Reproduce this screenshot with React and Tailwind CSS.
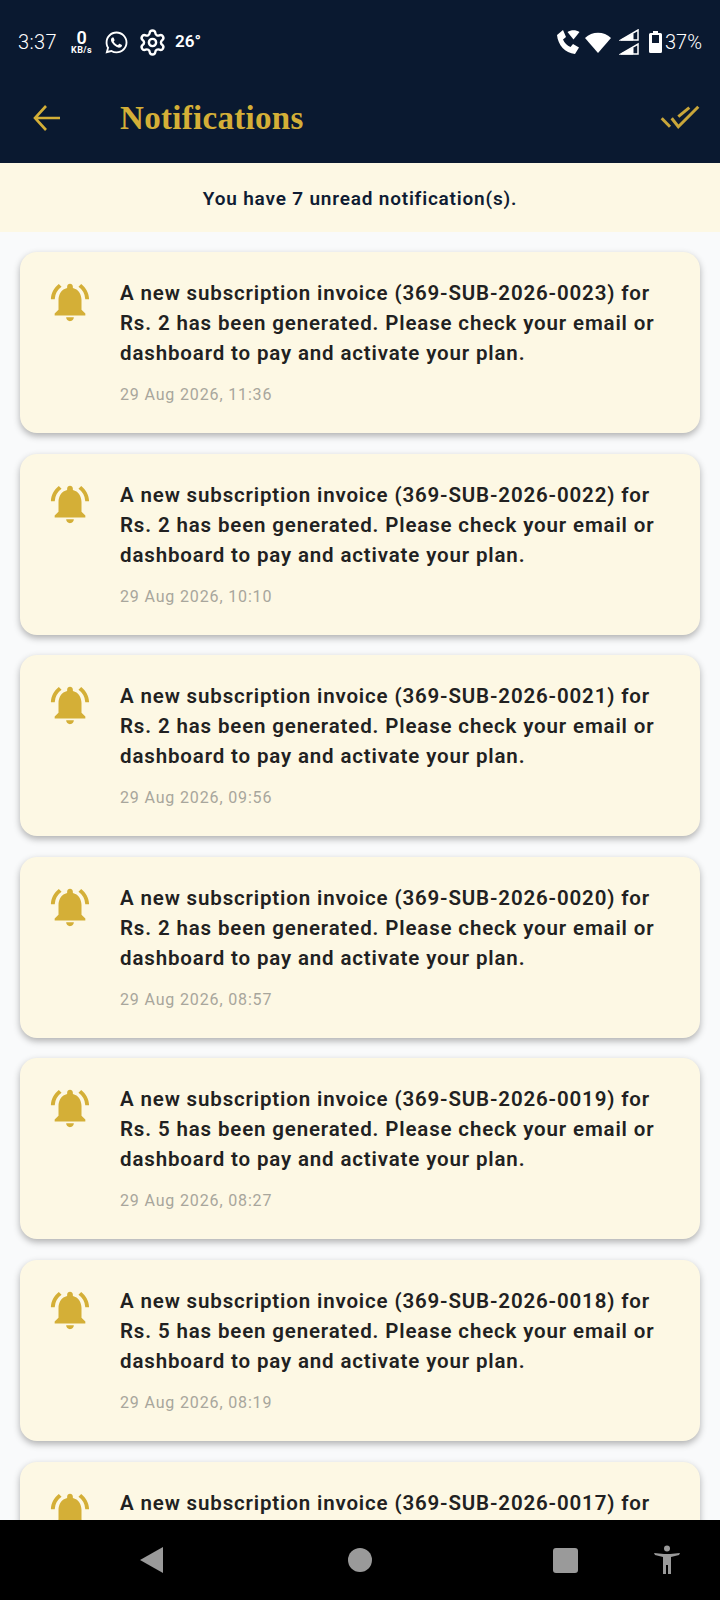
import React from 'react'
import { FaWhatsapp } from 'react-icons/fa'
import { MdNotificationsActive } from 'react-icons/md'
import { Settings } from 'lucide-react'

const NOTIFICATIONS = [
  { invoice: '369-SUB-2026-0023', amount: 2, date: '29 Aug 2026, 11:36' },
  { invoice: '369-SUB-2026-0022', amount: 2, date: '29 Aug 2026, 10:10' },
  { invoice: '369-SUB-2026-0021', amount: 2, date: '29 Aug 2026, 09:56' },
  { invoice: '369-SUB-2026-0020', amount: 2, date: '29 Aug 2026, 08:57' },
  { invoice: '369-SUB-2026-0019', amount: 5, date: '29 Aug 2026, 08:27' },
  { invoice: '369-SUB-2026-0018', amount: 5, date: '29 Aug 2026, 08:19' },
  { invoice: '369-SUB-2026-0017', amount: 5, date: '29 Aug 2026, 08:02' },
]

function StatusBar() {
  return (
    <div className="flex h-[84px] items-center justify-between pl-[18px] pr-[18px] text-white">
      <div className="flex items-center">
        <span className="text-[20px] font-light tracking-[0.4px]">3:37</span>
        <div className="ml-[12px] flex w-[25px] flex-col items-center leading-none">
          <span className="text-[18px] font-semibold leading-[16px]">0</span>
          <span className="text-[9px] font-bold leading-[9px] tracking-[0.4px]">KB/s</span>
        </div>
        <FaWhatsapp className="ml-[10px] text-[25px]" />
        <Settings className="ml-[9px] h-[29px] w-[29px]" strokeWidth={2} />
        <span className="ml-[8px] text-[17px] font-semibold">26°</span>
      </div>
      <div className="flex items-center">
        {/* call + wifi */}
        <svg width="24" height="26" viewBox="0 0 24 26">
          <path d="M1 6 L7 1 L10 8 L7 10.5 C8.5 14 11 16.5 14.5 18 L17 15 L23 18.5 L19 25 C9 24 2 16 1 6Z" fill="#fff" />
          <path d="M11.5 3 C15 0.5 20 0.5 23.5 3 L17.5 10.5Z" fill="#fff" />
        </svg>
        <svg className="ml-[5px]" width="26" height="21" viewBox="0 0 26 21">
          <path d="M0 6 C7 -1 19 -1 26 6 L13 21Z" fill="#fff" />
        </svg>
        <svg className="ml-[8px]" width="20" height="26" viewBox="0 0 20 26" fill="none" stroke="#fff">
          <path d="M19 1 V11 H2Z" strokeWidth="1.5" />
          <path d="M14 5 V11 H2Z" fill="#fff" strokeWidth="1" />
          <path d="M19 15 V25 H2Z" strokeWidth="1.5" />
          <path d="M14 19 V25 H2Z" fill="#fff" strokeWidth="1" />
        </svg>
        <svg className="ml-[10px]" width="13" height="22" viewBox="0 0 13 22">
          <path d="M4 0 H9 V2 H11.5 Q13 2 13 3.5 V20.5 Q13 22 11.5 22 H1.5 Q0 22 0 20.5 V3.5 Q0 2 1.5 2 H4Z" fill="#fff" />
          <rect x="3" y="4" width="7" height="8" fill="#0a1930" />
        </svg>
        <span className="ml-[3px] text-[20px] font-light">37%</span>
      </div>
    </div>
  )
}

function AppBar() {
  return (
    <div className="flex h-[79px] items-start justify-between pl-[33px] pr-[20px] pt-[16px]">
      <div className="flex items-center">
        <svg width="28" height="28" viewBox="0 0 28 28" fill="none" stroke="#d4af37" strokeWidth="2.6">
          <path d="M27 14 H2 M13 2 L2 14 L13 26" />
        </svg>
        <h1 className="ml-[59px] font-['Liberation_Serif',serif] text-[33px] font-bold leading-[36px] tracking-[0.3px] text-[#d4af37]">Notifications</h1>
      </div>
      <svg className="mt-[5px]" width="40" height="24" viewBox="0 0 40 24" fill="none" stroke="#c9a63a" strokeWidth="3">
        <path d="M1.7 13.3 L10 21.7" />
        <path d="M11.7 13.3 L18.3 21.7 L38.3 1.7" />
        <path d="M18.3 11.7 L29.3 2.7" />
      </svg>
    </div>
  )
}

function NotificationCard({ invoice, amount, date }) {
  const message = `A new subscription invoice (${invoice}) for Rs. ${amount} has been generated. Please check your email or dashboard to pay and activate your plan.`
  return (
    <div className="flex h-[181px] shrink-0 rounded-[17px] bg-[#fdf8e4] pl-[27px] pr-[28px] pt-[26px] shadow-[0_3px_7px_rgba(0,0,0,0.3)]">
      <MdNotificationsActive className="mt-[1px] h-[46px] w-[46px] shrink-0 text-[#d4af37]" />
      <div className="ml-[27px]">
        <p className="text-[20.5px] font-semibold leading-[30px] tracking-[0.85px] text-[#212121]">{message}</p>
        <p className="mt-[15px] text-[16px] leading-[24px] tracking-[0.85px] text-[#a8a69c]">{date}</p>
      </div>
    </div>
  )
}

function NavBar() {
  return (
    <div className="flex h-[80px] shrink-0 items-center bg-black pl-[140px]">
      <svg width="23" height="26" viewBox="0 0 23 26"><path d="M23 0 V26 L0 13Z" fill="#9a9a9a" /></svg>
      <div className="ml-[185px] h-[24px] w-[24px] rounded-full bg-[#9a9a9a]" />
      <div className="ml-[181px] h-[25px] w-[25px] rounded-[3px] bg-[#9a9a9a]" />
      <svg className="ml-[75px]" width="28" height="30" viewBox="0 0 28 30" fill="#9a9a9a">
        <circle cx="14" cy="3.5" r="3" />
        <path d="M1 8 L2 10 L10 12 V29 H13 V20 H15 V29 H18 V12 L26 10 L27 8 L17 9 H11Z" />
      </svg>
    </div>
  )
}

export default function App() {
  return (
    <div className="flex h-[1600px] w-[720px] flex-col overflow-hidden bg-[#f9fafb] font-['Roboto',sans-serif]">
      <div className="h-[163px] shrink-0 bg-[#0a1930]">
        <StatusBar />
        <AppBar />
      </div>
      <div className="flex h-[69px] shrink-0 items-center justify-center bg-[#fdf8e4] pt-[3px] text-[19px] font-semibold tracking-[0.8px] text-[#0f1c33]">
        You have 7 unread notification(s).
      </div>
      <div className="flex min-h-0 flex-1 flex-col gap-[20.6px] overflow-hidden px-[20px] pt-[20px]">
        {NOTIFICATIONS.map(n => (
          <NotificationCard key={n.invoice} {...n} />
        ))}
      </div>
      <NavBar />
    </div>
  )
}
